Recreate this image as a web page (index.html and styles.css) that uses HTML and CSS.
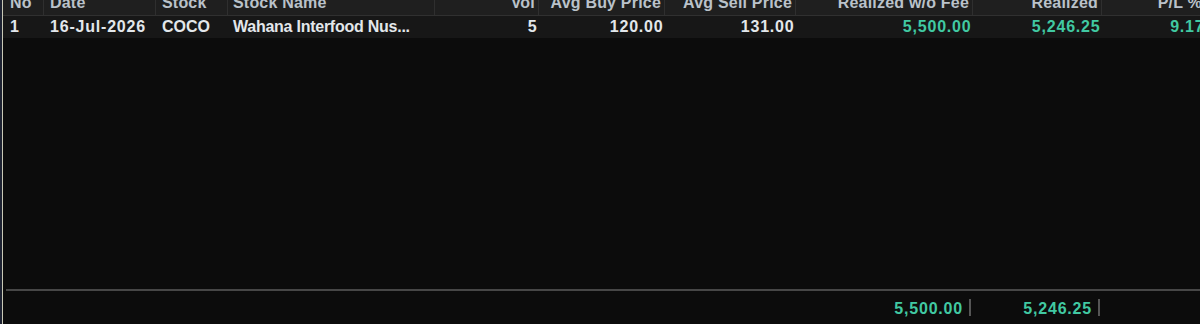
FILE: index.html
```html
<!DOCTYPE html>
<html>
<head>
<meta charset="utf-8">
<link rel="stylesheet" href="styles.css">
</head>
<body>
<div class="frame">
  <div class="edge"><div class="edge-dark"></div><div class="edge-light"></div></div>
  <div class="grid-wrap">
    <div class="grid">
      <div class="row head">
        <div class="cell l c1">No</div>
        <div class="cell l c2">Date</div>
        <div class="cell l c3">Stock</div>
        <div class="cell l c4">Stock Name</div>
        <div class="cell r">Vol</div>
        <div class="cell r">Avg Buy Price</div>
        <div class="cell r">Avg Sell Price</div>
        <div class="cell r">Realized w/o Fee</div>
        <div class="cell r">Realized</div>
        <div class="cell r">P/L %</div>
      </div>
      <div class="row data">
        <div class="cell l c1">1</div>
        <div class="cell l c2 num">16-Jul-2026</div>
        <div class="cell l c3">COCO</div>
        <div class="cell l c4 name">Wahana Interfood Nus...</div>
        <div class="cell r num">5</div>
        <div class="cell r num">120.00</div>
        <div class="cell r num">131.00</div>
        <div class="cell r num up">5,500.00</div>
        <div class="cell r num up">5,246.25</div>
        <div class="cell r num up">9.17</div>
      </div>
    </div>
    <div class="spacer"></div>
    <div class="foot-line"></div>
    <div class="row foot">
      <div class="cell"></div>
      <div class="cell"></div>
      <div class="cell"></div>
      <div class="cell"></div>
      <div class="cell"></div>
      <div class="cell"></div>
      <div class="cell"></div>
      <div class="cell r total"><span class="num up">5,500.00</span><span class="bar"></span></div>
      <div class="cell r total"><span class="num up">5,246.25</span><span class="bar"></span></div>
      <div class="cell"></div>
    </div>
  </div>
</div>
</body>
</html>
```

FILE: styles.css
```css
html, body {
  margin: 0;
  padding: 0;
  background: #0c0c0c;
  overflow: hidden;
}
body {
  width: 1200px;
  height: 324px;
  font-family: "Liberation Sans", Arial, sans-serif;
  font-weight: bold;
  font-size: 16px;
}
.frame {
  display: flex;
  height: 324px;
}
.edge {
  display: flex;
  flex: none;
}
.edge-dark {
  width: 2px;
  background: #1d2231;
}
.edge-light {
  width: 1px;
  background: #c9c9b6;
}
.grid-wrap {
  flex: none;
  width: 1203px;
  display: flex;
  flex-direction: column;
  overflow: hidden;
}
.grid {
  margin-top: -10px;
}
.row {
  display: grid;
  grid-template-columns: 41px 112px 72px 207px 104px 126px 131px 177px 129px 104px;
}
.cell {
  white-space: nowrap;
  overflow: hidden;
}
.l { text-align: left; padding-left: 6px; }
.r { text-align: right; padding-right: 3px; }
.c1 { padding-left: 7px; }
.c3 { padding-left: 6px; }
.c4 { padding-left: 5px; }

.head {
  background: #1f1f1f;
  border-bottom: 1px solid #303030;
  color: #bac2ca;
  line-height: 25px;
  letter-spacing: 0.2px;
}
.head .cell {
  border-right: 1px solid #2f2f2f;
}
.data {
  background: #171717;
  color: #e3e7eb;
  line-height: 22px;
}
.data .r { padding-right: 1.5px; }
.num { letter-spacing: 0.8px; }
.name { letter-spacing: -0.25px; }
.up { color: #41c9a2; }
.spacer { flex: 1; }
.foot-line {
  height: 2px;
  margin-left: 3px;
  background: #474747;
  flex: none;
}
.foot {
  height: 33px;
  flex: none;
}
.total {
  display: flex;
  justify-content: flex-end;
  align-items: center;
  padding-right: 2px;
}
.total .num {
  line-height: 33px;
  padding-top: 1px;
}
.bar {
  width: 2px;
  height: 17px;
  margin-left: 6px;
  background: #555555;
}
```
